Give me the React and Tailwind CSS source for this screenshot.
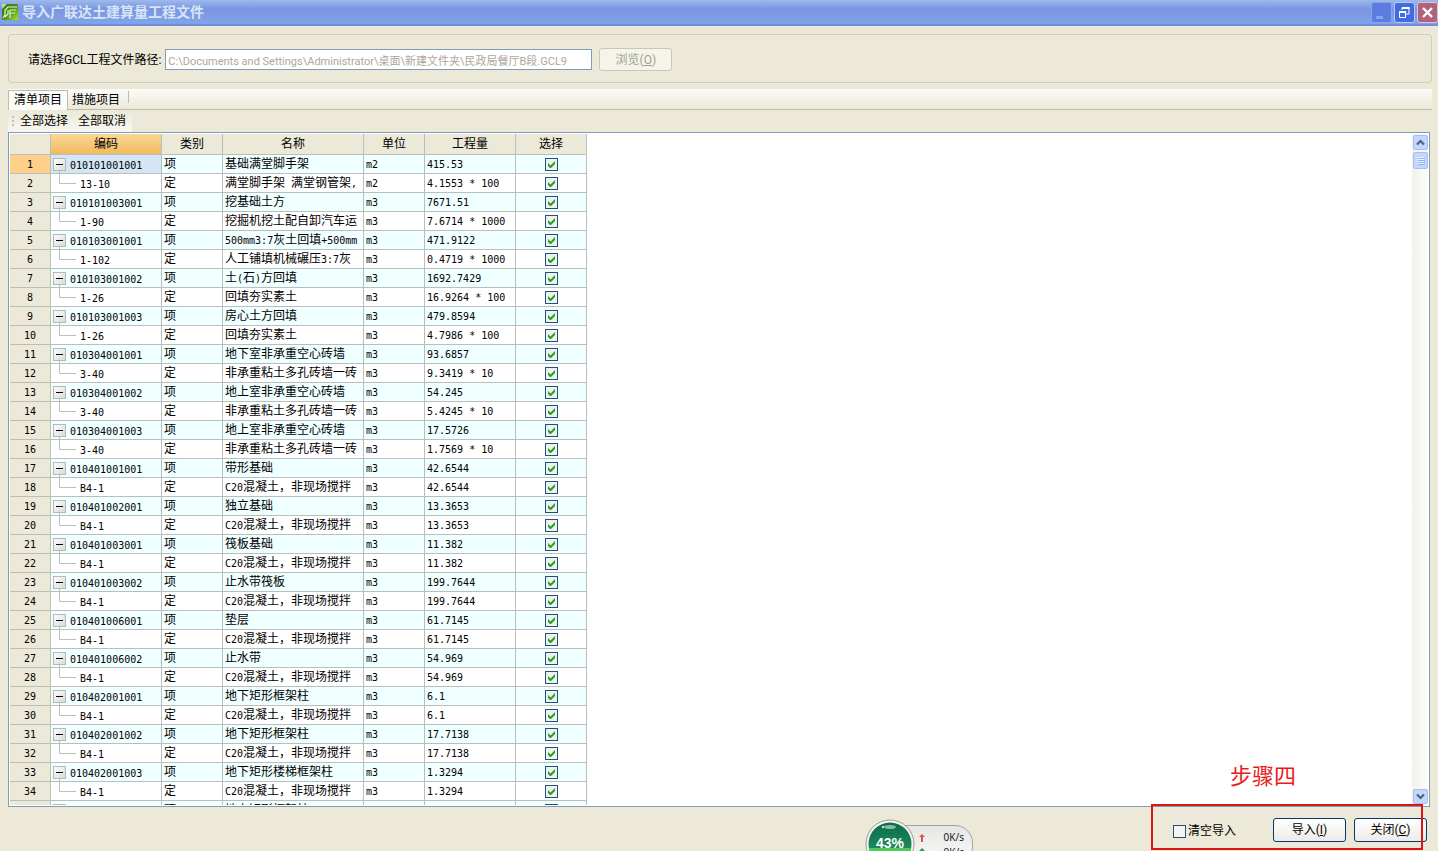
import { useState } from 'react';

const columns = [
  { title: '', width: 'w-[41px]' },
  { title: '编码', width: 'w-[111px]' },
  { title: '类别', width: 'w-[61px]' },
  { title: '名称', width: 'w-[141px]' },
  { title: '单位', width: 'w-[61px]' },
  { title: '工程量', width: 'w-[91px]' },
  { title: '选择', width: 'w-[71px]' },
];

const CONCRETE = 'C20混凝土，非现场搅拌';

// code, name, unit, quantity. Rows come in pairs: list item, then its quota
const rows = [
  ['010101001001', '基础满堂脚手架', 'm2', '415.53'],
  ['13-10', '满堂脚手架 满堂钢管架,', 'm2', '4.1553 * 100'],
  ['010101003001', '挖基础土方', 'm3', '7671.51'],
  ['1-90', '挖掘机挖土配自卸汽车运', 'm3', '7.6714 * 1000'],
  ['010103001001', '500mm3:7灰土回填+500mm', 'm3', '471.9122'],
  ['1-102', '人工铺填机械碾压3:7灰', 'm3', '0.4719 * 1000'],
  ['010103001002', '土(石)方回填', 'm3', '1692.7429'],
  ['1-26', '回填夯实素土', 'm3', '16.9264 * 100'],
  ['010103001003', '房心土方回填', 'm3', '479.8594'],
  ['1-26', '回填夯实素土', 'm3', '4.7986 * 100'],
  ['010304001001', '地下室非承重空心砖墙', 'm3', '93.6857'],
  ['3-40', '非承重粘土多孔砖墙一砖', 'm3', '9.3419 * 10'],
  ['010304001002', '地上室非承重空心砖墙', 'm3', '54.245'],
  ['3-40', '非承重粘土多孔砖墙一砖', 'm3', '5.4245 * 10'],
  ['010304001003', '地上室非承重空心砖墙', 'm3', '17.5726'],
  ['3-40', '非承重粘土多孔砖墙一砖', 'm3', '1.7569 * 10'],
  ['010401001001', '带形基础', 'm3', '42.6544'],
  ['B4-1', CONCRETE, 'm3', '42.6544'],
  ['010401002001', '独立基础', 'm3', '13.3653'],
  ['B4-1', CONCRETE, 'm3', '13.3653'],
  ['010401003001', '筏板基础', 'm3', '11.382'],
  ['B4-1', CONCRETE, 'm3', '11.382'],
  ['010401003002', '止水带筏板', 'm3', '199.7644'],
  ['B4-1', CONCRETE, 'm3', '199.7644'],
  ['010401006001', '垫层', 'm3', '61.7145'],
  ['B4-1', CONCRETE, 'm3', '61.7145'],
  ['010401006002', '止水带', 'm3', '54.969'],
  ['B4-1', CONCRETE, 'm3', '54.969'],
  ['010402001001', '地下矩形框架柱', 'm3', '6.1'],
  ['B4-1', CONCRETE, 'm3', '6.1'],
  ['010402001002', '地下矩形框架柱', 'm3', '17.7138'],
  ['B4-1', CONCRETE, 'm3', '17.7138'],
  ['010402001003', '地下矩形楼梯框架柱', 'm3', '1.3294'],
  ['B4-1', CONCRETE, 'm3', '1.3294'],
  ['010402001004', '地上矩形框架柱', 'm3', '6.1'],
];

// Latin runs are half the width of a Chinese character
function HalfWidth({ text }) {
  return text.split(/([\x20-\x7e]+)/).map((part, i) =>
    i % 2 ? (
      <span key={i} className="font-['DejaVu_Sans_Mono',monospace] text-[10px]">
        {part}
      </span>
    ) : (
      part
    )
  );
}

function AppIcon() {
  return (
    <svg viewBox="0 0 16 16" className="h-4 w-4 shrink-0">
      <defs>
        <linearGradient id="leaf" x1="0" y1="0" x2="1" y2="1">
          <stop offset="0" stopColor="#2e7414" />
          <stop offset="0.5" stopColor="#4a8c18" />
          <stop offset="1" stopColor="#a6e62a" />
        </linearGradient>
      </defs>
      <rect width="16" height="16" rx="1" fill="url(#leaf)" />
      <path d="M0 5 5 0H0z" fill="#b8dca0" />
      <path d="M15 3H6L3 6v5l-2 3M8 14V6h6M8 9h5M3 13l3-3V6" fill="none" stroke="#e6f6cf" strokeWidth="1.2" />
    </svg>
  );
}

function TitleBar() {
  const box = 'flex h-[21px] w-[21px] items-center justify-center rounded-[3px] border';
  return (
    <header className="flex h-[26px] shrink-0 items-center justify-between bg-linear-to-b from-[#9db9ec] via-[#7b96e1] via-35% to-[#82a6e8] pb-0.5 pl-0.5 shadow-[inset_0_-2px_1px_#6f8bdb]">
      <div className="flex items-center gap-1">
        <AppIcon />
        <h1 className="text-sm leading-5 font-bold text-[#d8e4f8]">导入广联达土建算量工程文件</h1>
      </div>
      <div className="flex gap-0.5">
        <button aria-label="最小化" className={`${box} border-[#8ba2ec] bg-[#5c7ce0]`}>
          <svg viewBox="0 0 19 19" className="h-[19px] w-[19px]">
            <path d="M4 13h7v3H4z" fill="#8ba4ee" />
          </svg>
        </button>
        <button aria-label="还原" className={`${box} border-[#b9c9f6] bg-[#416be0]`}>
          <svg viewBox="0 0 19 19" className="h-[19px] w-[19px]" fill="none" stroke="#fff">
            <path d="M7 7V4.500h7V11h-3" strokeWidth="1" />
            <path d="M7 5h7.500" strokeWidth="2" />
            <path d="M4.500 9.500h6v5h-6z" />
            <path d="M4 9h7" strokeWidth="2" />
          </svg>
        </button>
        <button aria-label="关闭窗口" className={`${box} border-[#d9c3dc] bg-[#b0627a]`}>
          <svg viewBox="0 0 19 19" className="h-[19px] w-[19px]">
            <path d="m5 5 9 9M14 5l-9 9" stroke="#fff" strokeWidth="2.4" />
          </svg>
        </button>
      </div>
    </header>
  );
}

function PathBox() {
  return (
    <section className="mx-1.5 mt-2 ml-2 flex h-[49px] shrink-0 items-center rounded-[4px] border border-[#cfccb8] pt-0.5 pl-[19px]">
      <label htmlFor="path" className="mr-1">
        请选择GCL工程文件路径:
      </label>
      <input
        id="path"
        disabled
        value="C:\Documents and Settings\Administrator\桌面\新建文件夹\民政局餐厅B段.GCL9"
        className="mr-[7px] h-[21px] w-[427px] border border-[#7f9db9] bg-white px-0.5 text-[11px] text-[#aca899]"
      />
      <button
        disabled
        className="h-[23px] w-[73px] rounded-[3px] border border-[#c9c7ba] bg-[#f5f4ea] text-[#a1a192]"
      >
        浏览(<u>O</u>)
      </button>
    </section>
  );
}

function Tabs() {
  return (
    <nav className="mx-1.5 mt-1.5 ml-2 flex h-[21px] shrink-0 items-end border-b border-[#bdbbae] bg-linear-to-b from-[#fcfbf8] to-[#ece9d8]">
      <button className="-mb-px h-5 w-[60px] border border-b-0 border-[#bdbbae] bg-[#fcfcfa] pb-0.5 leading-4">
        清单项目
      </button>
      <button className="h-[18px] w-14 leading-4">措施项目</button>
      <span className="mb-1.5 ml-1 h-3 border-r border-[#bdbbae]" />
    </nav>
  );
}

function Toolbar() {
  return (
    <div className="ml-2 flex h-[22px] shrink-0 items-center self-start bg-linear-to-b from-[#ece9d8] to-[#f8f7f2] pr-1.5">
      <svg viewBox="0 0 6 12" className="mx-[3px] h-3 w-1.5 fill-[#c3c1b3]">
        <path d="M1 1h2v2H1zM1 5h2v2H1zM1 9h2v2H1z" />
      </svg>
      <button className="mr-2.5">全部选择</button>
      <button>全部取消</button>
    </div>
  );
}

function CodeCell({ code, parent, selected }) {
  return (
    <td className={selected ? 'bg-[#d4e6f5]' : ''}>
      <div className="flex h-[18px] items-center">
        {parent ? (
          <svg viewBox="0 0 19 18" className="h-[18px] w-[19px] shrink-0">
            <defs>
              <linearGradient id="box" x1="0" y1="0" x2="1" y2="1">
                <stop offset="0" stopColor="#fff" />
                <stop offset="1" stopColor="#d8d8d4" />
              </linearGradient>
            </defs>
            <path d="M8.500 16v2" stroke="#b9bfbb" />
            <rect x="2.500" y="3.500" width="12" height="12" fill="url(#box)" stroke="#b4b9b6" />
            <path d="M5 9.500h7" stroke="#000" />
          </svg>
        ) : (
          <svg viewBox="0 0 29 18" className="h-[18px] w-[29px] shrink-0">
            <path d="M8.500 0v9.500H25" fill="none" stroke="#b9bfbb" />
          </svg>
        )}
        <span className="pt-0.5">
          <HalfWidth text={code} />
        </span>
      </div>
    </td>
  );
}

function Grid() {
  const [unchecked, setUnchecked] = useState([]);
  const toggle = (i) =>
    setUnchecked((list) => (list.includes(i) ? list.filter((n) => n !== i) : [...list, i]));

  return (
    <main className="mr-2 ml-2 flex min-h-0 flex-1 border border-[#7f9db9] bg-white p-px">
      <div className="min-w-0 flex-1 overflow-hidden">
        <table className="w-[577px] table-fixed border-separate border-spacing-0 [&_td]:border-r [&_td]:border-b [&_td]:border-[#b9bfbb] [&_td]:p-0 [&_th]:border-r [&_th]:border-b [&_th]:border-[#b9bfbb] [&_th]:p-0">
          <thead>
            <tr className="h-[21px] bg-[#ece9d8]">
              {columns.map((col) => (
                <th
                  key={col.title}
                  scope="col"
                  className={`${col.width} font-normal ${
                    col.title === '编码' ? 'bg-linear-to-b from-[#fad796] to-[#f1b95b]' : ''
                  }`}
                >
                  {col.title}
                </th>
              ))}
            </tr>
          </thead>
          <tbody>
            {rows.map(([code, name, unit, amount], i) => {
              const parent = i % 2 === 0;
              return (
                <tr key={i} className={`h-[19px] leading-[18px] ${parent ? 'bg-[#f0ffff]' : 'bg-white'}`}>
                  <td className={i === 0 ? 'bg-[#ffd08a]' : 'bg-[#ece9d8]'}>
                    <div className="h-[18px] text-center">
                      <HalfWidth text={String(i + 1)} />
                    </div>
                  </td>
                  <CodeCell code={code} parent={parent} selected={i === 0} />
                  <td>
                    <div className="h-[18px] pl-0.5">{parent ? '项' : '定'}</div>
                  </td>
                  <td>
                    <div className="h-[18px] overflow-hidden pl-0.5 whitespace-nowrap">
                      <HalfWidth text={name} />
                    </div>
                  </td>
                  <td>
                    <div className="h-[18px] pl-0.5">
                      <HalfWidth text={unit} />
                    </div>
                  </td>
                  <td>
                    <div className="h-[18px] pl-0.5 whitespace-nowrap">
                      <HalfWidth text={amount} />
                    </div>
                  </td>
                  <td>
                    <div className="relative mx-auto mt-px h-[13px] w-[13px]">
                      <input
                        type="checkbox"
                        aria-label={`选择 ${code}`}
                        checked={!unchecked.includes(i)}
                        onChange={() => toggle(i)}
                        className="peer block h-[13px] w-[13px] appearance-none border border-[#1c5180] bg-[#f1f1ed]"
                      />
                      <svg
                        viewBox="0 0 13 13"
                        className="pointer-events-none absolute inset-0 hidden h-[13px] w-[13px] fill-[#21a121] peer-checked:block"
                      >
                        <path d="M3 5v3l2 2h1l4-4V3L5.500 7.500z" />
                      </svg>
                    </div>
                  </td>
                </tr>
              );
            })}
          </tbody>
        </table>
      </div>
      <ScrollBar />
    </main>
  );
}

function ScrollBar() {
  const part = 'flex w-[15px] items-center justify-center rounded-[2px] border border-[#a9bdf0] bg-[#c6d5fc]';
  return (
    <div className="flex w-4 flex-col items-end bg-linear-to-r from-[#f1f0e8] to-[#fdfdfb] py-px">
      <button aria-label="向上滚动" className={`${part} h-[15px]`}>
        <svg viewBox="0 0 9 7" className="h-[7px] w-[9px]">
          <path d="m1 5.500 3.500-3.500L8 5.500" fill="none" stroke="#4d6185" strokeWidth="2.200" />
        </svg>
      </button>
      <div className={`${part} mt-0.5 h-[17px]`}>
        <svg viewBox="0 0 8 8" className="h-2 w-2">
          <path d="M0 .5h7M0 2.500h7M0 4.500h7M0 6.500h7" stroke="#eef4fe" />
          <path d="M1 1.500h7M1 3.500h7M1 5.500h7M1 7.500h7" stroke="#8cb0f8" />
        </svg>
      </div>
      <button aria-label="向下滚动" className={`${part} mt-auto h-[15px]`}>
        <svg viewBox="0 0 9 7" className="h-[7px] w-[9px]">
          <path d="M1 1.500 4.500 5 8 1.500" fill="none" stroke="#4d6185" strokeWidth="2.200" />
        </svg>
      </button>
    </div>
  );
}

// Floating memory / network meter hanging off the bottom edge
function SpeedMeter() {
  return (
    <div className="absolute top-3 left-[865px] h-[50px] w-[108px]">
      <div className="absolute top-1.5 right-0 h-10 w-[86px] rounded-[18px] border border-[#a3a39f] bg-linear-to-b from-[#e6e6e4] to-[#fafafa] pt-1 pr-2 text-right font-['Noto_Sans',sans-serif] text-[10px] leading-[15px] text-[#222]">
        <div>0K/s</div>
        <div>0K/s</div>
        <svg viewBox="0 0 8 24" className="absolute top-2 left-[30px] h-6 w-2">
          <path d="M4 0 7 3H5v5H3V3H1z" fill="#d9534a" />
          <path d="M4 14 7 17H5v6H3v-6H1z" fill="#2d9c4c" />
        </svg>
      </div>
      <svg viewBox="0 0 50 50" className="absolute top-0 left-0 h-[50px] w-[50px]">
        <defs>
          <linearGradient id="ball" x1="0" y1="0" x2="0" y2="1">
            <stop offset="0" stopColor="#0d6b49" />
            <stop offset="0.6" stopColor="#1c8a5c" />
          </linearGradient>
          <clipPath id="ballClip">
            <circle cx="25" cy="25" r="21.500" />
          </clipPath>
        </defs>
        <circle cx="25" cy="25" r="24" fill="#f4f4f2" stroke="#9a9a96" />
        <circle cx="25" cy="25" r="21.500" fill="url(#ball)" />
        <rect x="0" y="29" width="50" height="21" fill="#4fc95a" clipPath="url(#ballClip)" />
        <ellipse cx="25" cy="8" rx="6" ry="2" fill="#fff" opacity="0.5" />
        <circle cx="18" cy="8" r="1.200" fill="#fff" opacity="0.8" />
      </svg>
      <span className="absolute top-4 left-0 w-[50px] text-center font-['Liberation_Sans',sans-serif] text-sm leading-4 font-bold text-white">
        43%
      </span>
    </div>
  );
}

function Footer() {
  const button =
    'h-6 w-[73px] rounded-[3px] border border-[#003c74] bg-linear-to-b from-white to-[#ecebe5]';
  return (
    <footer className="relative flex h-11 shrink-0 items-center justify-end gap-2 pt-0.5 pr-[11px]">
      <SpeedMeter />
      <label className="mr-[29px] flex items-center gap-0.5 pt-0.5">
        <input type="checkbox" className="h-[13px] w-[13px] appearance-none border border-[#1c5180] bg-[#f4f4f1]" />
        清空导入
      </label>
      <button className={button}>
        导入(<u>I</u>)
      </button>
      <button className={button}>
        关闭(<u>C</u>)
      </button>
      <div className="pointer-events-none absolute right-[15px] bottom-px h-[46px] w-[272px] border-2 border-[#dd1512]" />
      <div className="pointer-events-none absolute right-[142px] bottom-[58px] text-[22px] leading-8 text-[#e81c1c]">
        步骤四
      </div>
    </footer>
  );
}

export default function App() {
  return (
    <div className="flex h-screen flex-col overflow-hidden bg-[#ece9d8] font-['Roboto','Noto_Sans_CJK_SC',sans-serif] text-xs text-black">
      <TitleBar />
      <PathBox />
      <Tabs />
      <Toolbar />
      <Grid />
      <Footer />
    </div>
  );
}
